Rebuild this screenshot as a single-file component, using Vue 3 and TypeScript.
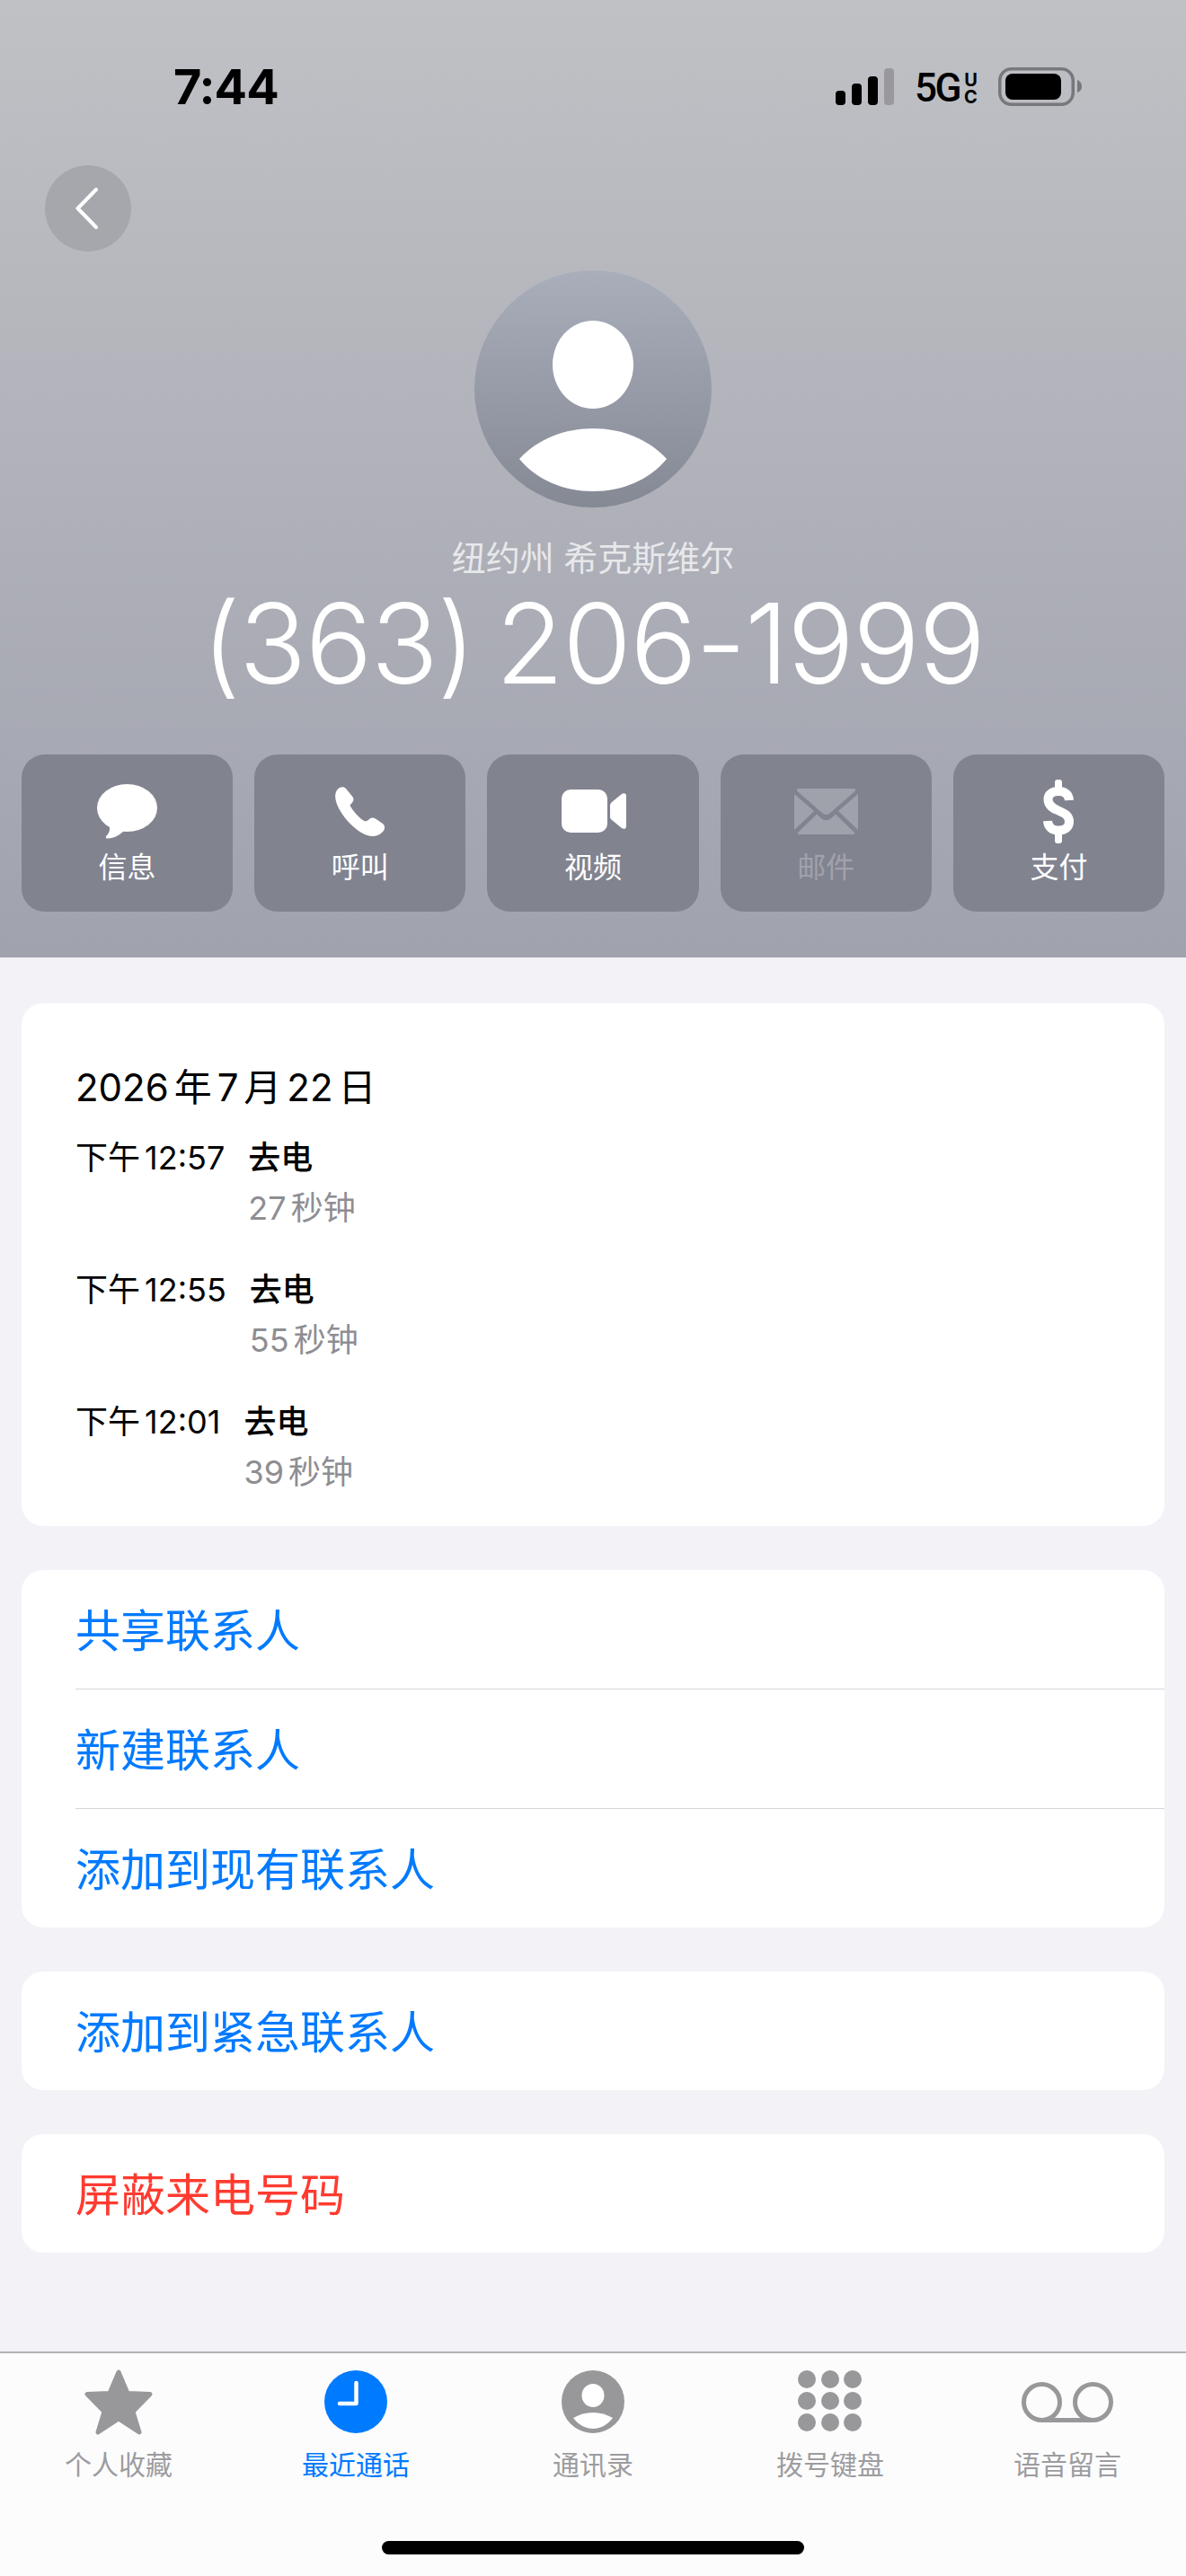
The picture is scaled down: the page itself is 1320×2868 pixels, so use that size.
<script setup lang="ts">
interface Call {
  time: string;
  kind: string;
  duration: string;
}

const calls: Call[] = [
  { time: '下午 12:57', kind: '去电', duration: '27 秒钟' },
  { time: '下午 12:55', kind: '去电', duration: '55 秒钟' },
  { time: '下午 12:01', kind: '去电', duration: '39 秒钟' },
];

const contactLinks = ['共享联系人', '新建联系人', '添加到现有联系人'];

const keypadDots: { x: number; y: number }[] = [];
for (const y of [10, 34, 58]) {
  for (const x of [10, 36, 61]) {
    keypadDots.push({ x, y });
  }
}
</script>

<template>
  <div class="page">
    <header class="hero">
      <div class="status-bar">
        <span class="clock">7:44</span>
        <div class="status-right">
          <svg class="signal" width="65" height="41" viewBox="0 0 65 41">
            <rect x="0" y="25" width="11" height="16" rx="4" fill="#000" />
            <rect x="18" y="17" width="11" height="24" rx="4" fill="#000" />
            <rect x="36" y="9" width="11" height="32" rx="4" fill="#000" />
            <rect x="54" y="0" width="11" height="41" rx="4" fill="#98989d" />
          </svg>
          <span class="network">5G</span>
          <span class="network-uc"><span>U</span><span>C</span></span>
          <svg class="battery" width="93" height="43" viewBox="0 0 93 43">
            <rect x="1.75" y="1.75" width="81.5" height="39.5" rx="13" fill="none" stroke="#77777c" stroke-width="3.5" />
            <rect x="8" y="7" width="62" height="29" rx="8" fill="#000" />
            <path d="M88 14 C91 15 93 18 93 21.5 C93 25 91 27 88 28 Z" fill="#77777c" />
          </svg>
        </div>
      </div>

      <button class="back-button">
        <svg width="25" height="46" viewBox="0 0 25 46">
          <polyline points="23,2 2.5,23 23,44" fill="none" stroke="#fff" stroke-width="4" stroke-linecap="round" stroke-linejoin="round" />
        </svg>
      </button>

      <svg class="avatar" width="264" height="264" viewBox="0 0 264 264">
        <defs>
          <linearGradient id="avatarFill" x1="0" y1="0" x2="0" y2="1">
            <stop offset="0" stop-color="#a9aebb" />
            <stop offset="1" stop-color="#858994" />
          </linearGradient>
        </defs>
        <circle cx="132" cy="132" r="132" fill="url(#avatarFill)" />
        <ellipse cx="132" cy="105" rx="45" ry="49" fill="#fff" />
        <path d="M50 210 C70 188 100 176 132 176 C164 176 194 188 214 210 C194 234 164 246 132 246 C100 246 70 234 50 210 Z" fill="#fff" />
      </svg>

      <div class="location">纽约州 希克斯维尔</div>
      <h1 class="number">(363) 206-1999</h1>

      <div class="actions">
        <div class="action">
          <div class="action-icon">
            <svg width="67" height="61" viewBox="0 0 67 61">
              <ellipse cx="33.5" cy="26.5" rx="33.5" ry="26.5" fill="#fff" />
              <path d="M13 44 C15 50 14 54 10.5 57.5 C9 59.5 10 61 12 60.5 C19 60 25 57 30 52 Z" fill="#fff" />
            </svg>
          </div>
          <span class="action-label">信息</span>
        </div>
        <div class="action">
          <div class="action-icon">
            <svg width="55" height="55" viewBox="0 0 55 55">
              <path d="M3 2.5 C6 -0.5 10 -0.5 12 2 L19 10.5 C21 13 21 15 19 17.5 L16.5 20.5 C19.5 27 27 35 32.5 38 C35 39 36.5 37.5 38 36 C40 34 42.5 34 45 35.5 L53 41 C56 43.5 55.5 47.5 53 50 C48 55.5 41 56.5 33 53 C20 47 6 31 1.5 18 C-0.5 12 -0.5 6.5 3 2.5 Z" fill="#fff" />
            </svg>
          </div>
          <span class="action-label">呼叫</span>
        </div>
        <div class="action">
          <div class="action-icon video-icon">
            <svg width="72" height="48" viewBox="0 0 72 48">
              <rect x="0" y="0" width="51" height="48" rx="10" fill="#fff" />
              <path d="M54 18 C54 16 55 15 56 14 L67 5 C69 3.5 72 4 72 7 V41 C72 44 69 44.5 67 43 L56 34 C55 33 54 32 54 30 Z" fill="#fff" />
            </svg>
          </div>
          <span class="action-label">视频</span>
        </div>
        <div class="action action-disabled">
          <div class="action-icon">
            <svg width="71" height="51" viewBox="0 0 71 51">
              <path d="M5 0 H66 C68 0 69 1.5 67.5 3 L40 27 C37 29.5 34 29.5 31 27 L3.5 3 C2 1.5 3 0 5 0 Z" fill="#fff" />
              <path d="M0 6 L22 25 L0 46 Z" fill="#fff" />
              <path d="M71 6 L49 25 L71 46 Z" fill="#fff" />
              <path d="M4.5 48.5 L25 28.5 L30 33 C33.5 36 37.5 36 41 33 L46 28.5 L66.5 48.5 C68 50 67 51 65.5 51 H5.5 C4 51 3 50 4.5 48.5 Z" fill="#fff" />
            </svg>
          </div>
          <span class="action-label">邮件</span>
        </div>
        <div class="action">
          <div class="action-icon">
            <svg width="34" height="71" viewBox="0 0 34 71">
              <rect x="13" y="0" width="8" height="14" rx="3" fill="#fff" />
              <rect x="13" y="57" width="8" height="14" rx="3" fill="#fff" />
              <path d="M29 23 C28.5 16 24 13 17 13 C10 13 5.5 16.5 5.5 22 C5.5 29 11 32 17 34.5 C24 37.5 29 40 29 47 C29 53 24 56.5 17 56.5 C10 56.5 5.5 53 5 46" fill="none" stroke="#fff" stroke-width="10" />
            </svg>
          </div>
          <span class="action-label">支付</span>
        </div>
      </div>
    </header>

    <main class="content">
      <section class="card history">
        <div class="history-date">2026 年 7 月 22 日</div>
        <div v-for="call in calls" :key="call.time" class="call-row">
          <span class="call-time">{{ call.time }}</span>
          <div class="call-info">
            <span class="call-kind">{{ call.kind }}</span>
            <span class="call-duration">{{ call.duration }}</span>
          </div>
        </div>
      </section>

      <section class="card">
        <div v-for="link in contactLinks" :key="link" class="link-row">
          <span class="link-text">{{ link }}</span>
        </div>
      </section>

      <section class="card">
        <div class="link-row">
          <span class="link-text">添加到紧急联系人</span>
        </div>
      </section>

      <section class="card">
        <div class="link-row">
          <span class="link-text danger">屏蔽来电号码</span>
        </div>
      </section>
    </main>

    <footer class="tabbar">
      <nav class="tabs">
        <div class="tab">
          <div class="tab-icon">
            <svg width="76" height="73" viewBox="0 0 76 73">
              <polygon points="38,3 48,26.5 73,27.5 54,47 61,70 38,55 15,70 22,47 3,27.5 28,26.5" fill="#98989b" stroke="#98989b" stroke-width="5" stroke-linejoin="round" />
            </svg>
          </div>
          <span class="tab-label">个人收藏</span>
        </div>
        <div class="tab tab-active">
          <div class="tab-icon">
            <svg width="70" height="70" viewBox="0 0 70 70">
              <circle cx="35" cy="35" r="35" fill="#007aff" />
              <polyline points="17,37 35.5,37 35.5,14" fill="none" stroke="#fff" stroke-width="4.5" stroke-linecap="round" stroke-linejoin="round" />
            </svg>
          </div>
          <span class="tab-label">最近通话</span>
        </div>
        <div class="tab">
          <div class="tab-icon">
            <svg width="70" height="70" viewBox="0 0 70 70">
              <circle cx="35" cy="35" r="35" fill="#98989b" />
              <ellipse cx="35" cy="28" rx="12.5" ry="13" fill="#fff" />
              <path d="M13 53 C20 49 27 47 35 47 C43 47 50 49 57 53 C51 61 43 65 35 65 C27 65 19 61 13 53 Z" fill="#fff" />
            </svg>
          </div>
          <span class="tab-label">通讯录</span>
        </div>
        <div class="tab">
          <div class="tab-icon">
            <svg width="72" height="70" viewBox="0 0 72 70">
              <circle v-for="dot in keypadDots" :key="`${dot.x}-${dot.y}`" :cx="dot.x" :cy="dot.y" r="10" fill="#98989b" />
            </svg>
          </div>
          <span class="tab-label">拨号键盘</span>
        </div>
        <div class="tab">
          <div class="tab-icon">
            <svg width="102" height="45" viewBox="0 0 102 45">
              <circle cx="22.5" cy="22.5" r="20" fill="none" stroke="#98989b" stroke-width="5" />
              <circle cx="79.5" cy="22.5" r="20" fill="none" stroke="#98989b" stroke-width="5" />
              <line x1="22.5" y1="42.5" x2="79.5" y2="42.5" stroke="#98989b" stroke-width="5" />
            </svg>
          </div>
          <span class="tab-label">语音留言</span>
        </div>
      </nav>
      <div class="home-indicator"></div>
    </footer>
  </div>
</template>

<style>
html,
body {
  margin: 0;
  background: #f2f2f7;
}
</style>

<style scoped>
.page {
  display: flex;
  flex-direction: column;
  height: 2868px;
  overflow: hidden;
  font-family: Inter, "Noto Sans CJK SC", sans-serif;
  background: #f2f2f7;
  color: #000;
}

.hero {
  display: flex;
  flex-direction: column;
  height: 1066px;
  box-sizing: border-box;
  padding: 75px 24px 0;
  background: linear-gradient(180deg, #c0c1c5 0%, #a0a2ae 100%);
}

.status-bar {
  display: flex;
  justify-content: space-between;
  align-items: center;
  height: 43px;
  padding: 0 92px 0 169px;
}

.clock {
  font-size: 54px;
  font-weight: 700;
  line-height: 43px;
  letter-spacing: -1px;
}

.status-right {
  display: flex;
  align-items: flex-end;
  height: 43px;
}

.signal {
  margin-bottom: 1px;
}

.network {
  margin-left: 23px;
  font-family: Roboto, sans-serif;
  font-size: 44px;
  font-weight: 500;
  line-height: 40px;
  letter-spacing: -2.5px;
}

.network-uc {
  display: flex;
  flex-direction: column;
  width: 15px;
  margin-left: 5px;
  font-size: 20px;
  font-weight: 700;
  line-height: 19px;
  text-align: center;
}

.battery {
  margin-left: 23px;
}

.back-button {
  display: flex;
  align-items: center;
  justify-content: center;
  width: 96px;
  height: 96px;
  margin: 66px 0 0 26px;
  padding: 0 4px 0 0;
  border: none;
  border-radius: 50%;
  background: #a6a7ac;
}

.avatar {
  align-self: center;
  margin-top: 21px;
}

.location {
  margin-top: 34px;
  font-size: 38px;
  line-height: 44px;
  text-align: center;
  color: rgba(255, 255, 255, 0.72);
}

.number {
  margin: 8px 0 0;
  font-size: 124px;
  font-weight: 350;
  line-height: 130px;
  letter-spacing: -1.5px;
  word-spacing: -10px;
  text-align: center;
  white-space: nowrap;
  color: #fff;
}

.actions {
  display: grid;
  grid-template-columns: repeat(5, 1fr);
  gap: 24px;
  margin-top: 59px;
}

.action {
  display: flex;
  flex-direction: column;
  align-items: center;
  height: 175px;
  box-sizing: border-box;
  padding-top: 27px;
  border-radius: 26px;
  background: #81838f;
  color: #fff;
}

.action-icon {
  display: flex;
  align-items: center;
  justify-content: center;
  height: 72px;
}

.video-icon {
  padding-left: 3px;
}

.action-label {
  margin-top: 7px;
  font-size: 32px;
  line-height: 40px;
}

.action-disabled .action-icon,
.action-disabled .action-label {
  opacity: 0.25;
}

.content {
  display: flex;
  flex-direction: column;
  flex: 1;
  gap: 49px;
  padding: 51px 24px 0;
}

.card {
  overflow: hidden;
  border-radius: 24px;
  background: #fff;
}

.history {
  padding: 69px 60px 38px;
}

.history-date {
  margin-bottom: 31px;
  font-size: 42px;
  line-height: 50px;
  word-spacing: -0.14em;
}

.call-row {
  display: flex;
  gap: 26px;
  margin-bottom: 47px;
}

.call-row:last-child {
  margin-bottom: 0;
}

.call-time {
  font-size: 36px;
  line-height: 44px;
  word-spacing: -0.14em;
}

.call-info {
  display: flex;
  flex-direction: column;
  gap: 12px;
}

.call-kind {
  font-size: 36px;
  font-weight: 500;
  line-height: 44px;
}

.call-duration {
  font-size: 36px;
  line-height: 44px;
  word-spacing: -0.14em;
  color: #8e8e93;
}

.link-row {
  display: flex;
  align-items: center;
  height: 132px;
  box-sizing: content-box;
  margin-left: 60px;
  border-bottom: 1px solid #d6d6da;
}

.link-row:last-child {
  border-bottom: none;
}

.link-text {
  padding-top: 3px;
  font-size: 50px;
  line-height: 60px;
  color: #007aff;
}

.danger {
  color: #ff3b30;
}

.tabbar {
  display: flex;
  flex-direction: column;
  height: 250px;
  box-sizing: border-box;
  border-top: 2px solid #b2b2b7;
  background: #fcfcfd;
}

.tabs {
  display: grid;
  grid-template-columns: repeat(5, 1fr);
  padding-top: 17px;
}

.tab {
  display: flex;
  flex-direction: column;
  align-items: center;
  color: #9c9c9f;
}

.tab-active {
  color: #007aff;
}

.tab-icon {
  display: flex;
  align-items: center;
  justify-content: center;
  height: 74px;
}

.tab-label {
  margin-top: 15px;
  font-size: 30px;
  line-height: 36px;
}

.home-indicator {
  width: 470px;
  height: 15px;
  margin: auto auto 24px;
  border-radius: 8px;
  background: #000;
}
</style>
